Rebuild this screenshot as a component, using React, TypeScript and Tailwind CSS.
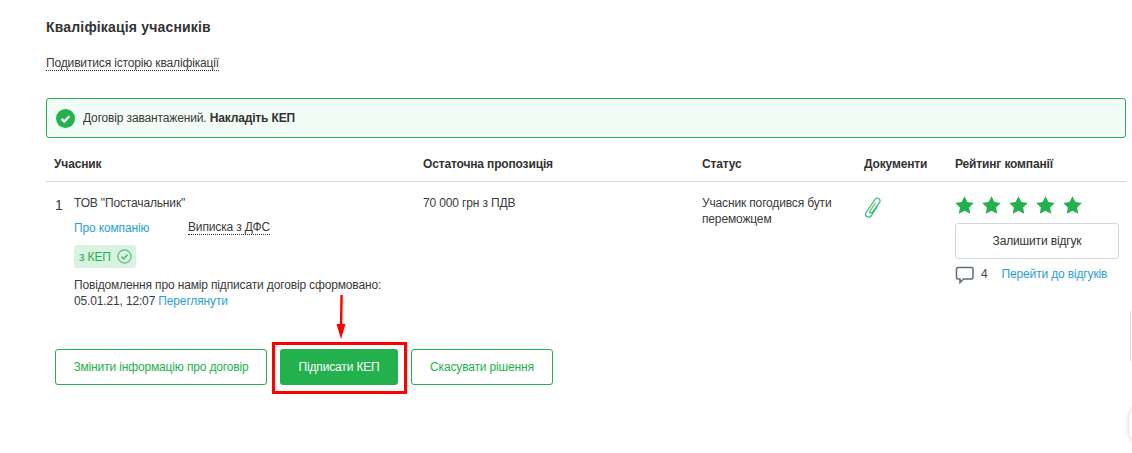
import React from "react";

const Star = () => (
  <svg className="w-[19px] h-[18px]" viewBox="0 0 24 23" fill="#22b14c">
    <path d="M12 .3l3.7 7.4 8.1 1.2-5.9 5.7 1.4 8.1-7.3-3.8-7.3 3.8 1.4-8.1L.2 8.9l8.1-1.2z" />
  </svg>
);

const Paperclip = () => (
  <svg className="w-[18px] h-[24px]" viewBox="0 -2 18 24" fill="none" strokeLinecap="round">
    <path
      d="M11 6.5L6 14c-1 1.8 1.2 3 2.3 1.4L15.6 5.5c2-3-2.5-6-4.6-3L2 15.5c-2.2 3.5 3 6.5 5.5 3L13 10"
      stroke="#35bd8f"
      strokeWidth="1.3"
    />
    <path d="M11 6.5L6 14" stroke="#a8c95a" strokeWidth="1.2" />
  </svg>
);

export default function App() {
  return (
    <div className="relative w-[1132px] h-[453px] overflow-hidden bg-white text-[12px] leading-[16px] tracking-[-0.15px] text-[#3a3a3a] font-['Liberation_Sans',Arial,sans-serif]">
      <div className="pl-[46px] pr-[6px] pt-[19px]">
        <h2 className="text-[14px] leading-[16px] font-bold tracking-[0.17px] text-[#333]">Кваліфікація учасників</h2>
        <a className="inline-block mt-[21px] border-b border-dotted border-[#333] leading-[14px]">Подивитися історію кваліфікації</a>

        {/* alert */}
        <div className="mt-[27px] h-[40px] flex items-center pl-[9px] border border-[#22b14c] rounded-[3px] bg-[#f1fdf6]">
          <svg className="w-[19px] h-[19px]" viewBox="0 0 20 20">
            <circle cx="10" cy="10" r="10" fill="#22b14c" />
            <path d="M5.8 10.4l2.9 2.8 5.4-5.6" fill="none" stroke="#fff" strokeWidth="2.4" />
          </svg>
          <span className="ml-[8px]">Договір завантажений. <b className="text-[#333]">Накладіть КЕП</b></span>
        </div>

        {/* table head */}
        <div className="flex h-[44px] items-center pt-[8px] font-bold border-b border-[#d5d5dd] text-[#333]">
          <div className="w-[377px] pl-[8px]">Учасник</div>
          <div className="w-[279px]">Остаточна пропозиція</div>
          <div className="w-[162px]">Статус</div>
          <div className="w-[91px]">Документи</div>
          <div>Рейтинг компанії</div>
        </div>

        {/* row */}
        <div className="flex pt-[13px]">
          <div className="w-[377px] flex pl-[9px]">
            <span className="w-[19px] text-[14px] leading-[20px]">1</span>
            <div>
              <div>ТОВ "Постачальник"</div>
              <div className="flex mt-[9px]">
                <a className="w-[114px] text-[#2a9fd6]">Про компанію</a>
                <a className="border-b border-dotted border-[#333] leading-[14px] h-[15px]">Виписка з ДФС</a>
              </div>
              <div className="mt-[9px] w-[62px] h-[23px] flex items-center pl-[5px] gap-[6px] rounded-[3px] bg-[#d9f3e3] text-[#22b14c]">
                з КЕП
                <svg className="w-[15px] h-[15px]" viewBox="0 0 16 16" fill="none" stroke="#5cba78">
                  <circle cx="8" cy="8" r="7" strokeWidth="1.3" />
                  <path d="M4.8 8.2l2.3 2.2 4.2-4.4" strokeWidth="1.8" />
                </svg>
              </div>
              <div className="mt-[9px] w-[320px]">Повідомлення про намір підписати договір сформовано:</div>
              <div>05.01.21, 12:07 <a className="text-[#2a9fd6]">Переглянути</a></div>
            </div>
          </div>
          <div className="w-[279px]">70 000 грн з ПДВ</div>
          <div className="w-[162px] pr-[20px]">Учасник погодився бути переможцем</div>
          <div className="w-[91px]"><Paperclip /></div>
          <div className="w-[164px] mt-[1px]">
            <div className="flex gap-[8px]">
              <Star /><Star /><Star /><Star /><Star />
            </div>
            <button className="mt-[9px] w-[164px] h-[36px] border border-[#d5d5dd] rounded-[3px] text-[#333]">Залишити відгук</button>
            <div className="flex items-center mt-[5px]">
              <svg className="w-[19px] h-[18px] mt-[2px]" viewBox="0 0 19 18" fill="none">
                <path d="M3 1.5h13.5a1.5 1.5 0 011.5 1.5v8.5a1.5 1.5 0 01-1.5 1.5H8.5l-3.5 3.5V13H3a1.5 1.5 0 01-1.5-1.5V3A1.5 1.5 0 013 1.5z" stroke="#5b6b7b" strokeWidth="1.5" />
              </svg>
              <span className="ml-[7px] text-[#444]">4</span>
              <a className="ml-[14px] text-[#2a9fd6]">Перейти до відгуків</a>
            </div>
          </div>
        </div>

        {/* actions */}
        <div className="flex mt-[40px] pl-[9px] items-center">
          <button className="w-[212px] h-[36px] border border-[#22b14c] rounded-[3px] text-[#22b14c]">Змінити інформацію про договір</button>
          <button className="ml-[13px] w-[118px] h-[36px] rounded-[3px] bg-[#22b14c] text-white font-medium">Підписати КЕП</button>
          <button className="ml-[13px] w-[142px] h-[36px] border border-[#22b14c] rounded-[3px] text-[#22b14c]">Скасувати рішення</button>
        </div>
      </div>

      {/* red annotation */}
      <div className="absolute left-[272px] top-[342px] w-[135px] h-[52px] border-[3px] border-[#ff0000]" />
      <svg className="absolute left-[334px] top-[295px] w-[14px] h-[46px]" viewBox="0 0 14 46">
        <path d="M7.6 0L7 32" stroke="#f00" strokeWidth="2.4" fill="none" />
        <path d="M2.5 29h9L7 44z" fill="#f00" />
      </svg>

      {/* edge widgets */}
      <div className="absolute left-[1130px] top-[308px] w-[20px] h-[56px] border border-[#dcdce4] rounded-[6px]" />
      <div className="absolute left-[1129px] top-[405px] w-[30px] h-[40px] rounded-full bg-white shadow-[0_0_5px_rgba(0,0,0,0.2)]" />
    </div>
  );
}
